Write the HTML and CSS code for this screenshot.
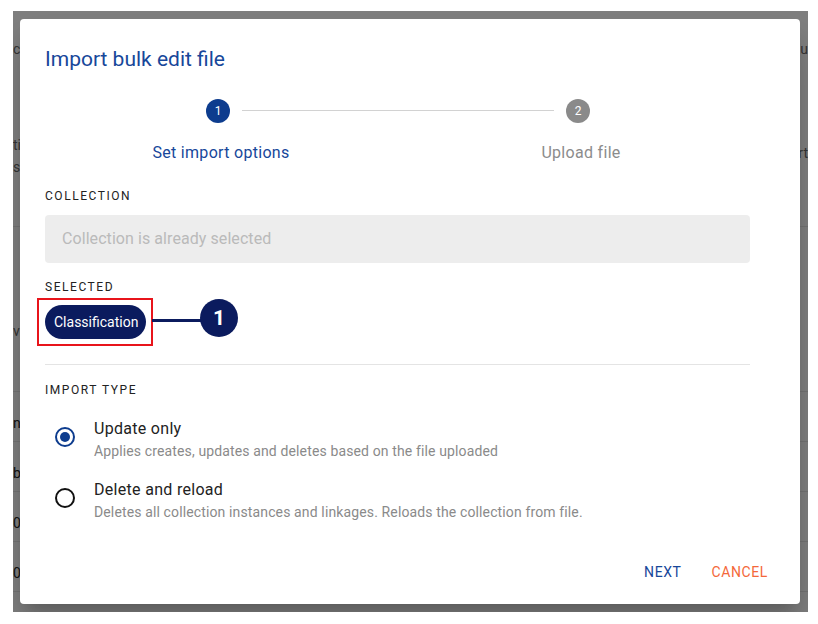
FILE: index.html
```html
<!DOCTYPE html>
<html lang="en">
<head>
    <meta charset="UTF-8">
    <meta name="viewport" content="width=device-width, initial-scale=1.0">
    <title>Import bulk edit file</title>
    <link rel="stylesheet" href="styles.css">
</head>
<body>
    <div class="screen">
        <div class="app">
            <div class="app-row row-head">
                <span class="edge-left t1">ct</span>
                <span class="edge-right t1">u</span>
                <span class="edge-left t2">ti</span>
                <span class="edge-right t5">rt</span>
                <span class="edge-left t3">sc</span>
            </div>
            <div class="app-row row-mid">
                <span class="edge-left t4">ve</span>
            </div>
            <div class="app-row row-line"><span class="edge-left dark">n</span></div>
            <div class="app-row row-line"><span class="edge-left dark">b</span></div>
            <div class="app-row row-line"><span class="edge-left dark">0</span></div>
            <div class="app-row row-line"><span class="edge-left dark">0</span></div>

            <div class="backdrop">
                <div class="dialog">
                    <h2 class="dialog-title">Import bulk edit file</h2>

                    <div class="dialog-body">
                        <div class="stepper">
                            <div class="step">
                                <div class="step-circle active">1</div>
                                <div class="step-label active">Set import options</div>
                            </div>
                            <div class="step-line"></div>
                            <div class="step">
                                <div class="step-circle">2</div>
                                <div class="step-label">Upload file</div>
                            </div>
                        </div>

                        <div class="section-label first">Collection</div>
                        <input type="text" class="field" placeholder="Collection is already selected" disabled>

                        <div class="section-label selected">Selected</div>
                        <div class="chips">
                            <div class="chip-wrap">
                                <span class="chip">Classification</span>
                                <span class="callout-box"></span>
                                <span class="callout-line"></span>
                                <span class="callout-badge">1</span>
                            </div>
                        </div>

                        <div class="divider"></div>

                        <div class="section-label import">Import type</div>
                        <div class="options">
                            <div class="option">
                                <div class="radio-box"><span class="radio checked"></span></div>
                                <div class="option-text">
                                    <div class="option-title">Update only</div>
                                    <div class="option-desc">Applies creates, updates and deletes based on the file uploaded</div>
                                </div>
                            </div>
                            <div class="option">
                                <div class="radio-box"><span class="radio"></span></div>
                                <div class="option-text">
                                    <div class="option-title">Delete and reload</div>
                                    <div class="option-desc">Deletes all collection instances and linkages. Reloads the collection from file.</div>
                                </div>
                            </div>
                        </div>
                    </div>

                    <div class="actions">
                        <button class="btn btn-next">Next</button>
                        <button class="btn btn-cancel">Cancel</button>
                    </div>
                </div>
            </div>
        </div>
    </div>
</body>
</html>
```

FILE: styles.css
```css
body {
    margin: 0;
    padding: 0;
    background: #fff;
    font-family: 'Roboto', 'Liberation Sans', sans-serif;
}

.screen {
    padding: 11px 10px 12px 13px;
}

.app {
    position: relative;
    width: 795px;
    height: 601px;
    background: #fff;
    overflow: hidden;
    display: flex;
    flex-direction: column;
    font-size: 14px;
    color: #6a6a6a;
}

.app-row {
    position: relative;
    border-bottom: 1px solid #e6e6e6;
    flex-shrink: 0;
}

.row-head {
    height: 215px;
}

.row-mid {
    height: 164px;
}

.row-line {
    height: 49px;
    display: flex;
    align-items: center;
}

.edge-left {
    position: absolute;
    left: 0;
}

.edge-right {
    position: absolute;
    right: 0;
}

.row-line .edge-left {
    position: static;
    margin-top: 12px;
}

.dark {
    color: #222;
}

.t1 { top: 30px; }
.t2 { top: 126px; }
.t3 { top: 148px; }
.t4 { top: 96px; }
.t5 { top: 134px; }

.backdrop {
    position: absolute;
    inset: 0;
    background: rgba(0, 0, 0, 0.5);
    display: flex;
    padding: 8px 8px 8px 7px;
}

.dialog {
    flex: 1;
    background: #fff;
    border-radius: 4px;
    box-shadow: 0 11px 15px -7px rgba(0, 0, 0, 0.2), 0 24px 38px 3px rgba(0, 0, 0, 0.14);
    display: flex;
    flex-direction: column;
    padding: 24px 24px 14px 25px;
}

.dialog-title {
    margin: 0;
    font-size: 21px;
    font-weight: 400;
    line-height: 32px;
    color: #17479a;
}

.dialog-body {
    padding-right: 26px;
}

.stepper {
    display: flex;
    align-items: flex-start;
    margin-top: 24px;
    padding: 0 160px 0 161px;
}

.step {
    width: 24px;
    display: flex;
    flex-direction: column;
    align-items: center;
}

.step-circle {
    width: 24px;
    height: 24px;
    border-radius: 50%;
    background: #8a8a8a;
    color: #fff;
    font-size: 12px;
    line-height: 24px;
    text-align: center;
    flex-shrink: 0;
}

.step-circle.active {
    background: #0d3c8e;
}

.step-label {
    margin-top: 18px;
    padding-left: 6px;
    font-size: 16px;
    line-height: 24px;
    letter-spacing: 0.3px;
    white-space: nowrap;
    color: #8c8c8c;
}

.step-label.active {
    color: #17479a;
}

.step-line {
    flex: 1;
    height: 1px;
    background: #d2d2d2;
    margin: 11px 12px 0;
}

.section-label {
    font-size: 12px;
    line-height: 16px;
    letter-spacing: 1.55px;
    text-transform: uppercase;
    color: #222;
}

.section-label.first {
    margin-top: 23px;
}

.section-label.selected {
    margin-top: 16px;
}

.section-label.import {
    margin-top: 17px;
}

.field {
    display: block;
    box-sizing: border-box;
    width: 100%;
    height: 48px;
    margin-top: 11px;
    padding: 0 17px 2px;
    border: none;
    border-radius: 4px;
    background: #ededed;
    font-family: inherit;
    font-size: 16px;
    letter-spacing: 0.07px;
}

.field::placeholder {
    color: #bababa;
}

.chips {
    display: flex;
    margin-top: 10px;
}

.chip-wrap {
    position: relative;
    display: flex;
}

.chip {
    height: 34px;
    padding: 0 8px 0 9px;
    border-radius: 17px;
    background: #0b1b5e;
    color: #fff;
    font-size: 14px;
    line-height: 34px;
    white-space: nowrap;
}

.callout-box {
    position: absolute;
    top: -7px;
    bottom: -7px;
    left: -8px;
    right: -7px;
    border: 2px solid #e8141b;
}

.callout-line {
    position: absolute;
    top: 14px;
    left: 107px;
    width: 50px;
    height: 3px;
    background: #0b1b5e;
}

.callout-badge {
    position: absolute;
    top: -6px;
    left: 155px;
    width: 38px;
    height: 38px;
    border-radius: 50%;
    background: #0b1b5e;
    color: #fff;
    font-size: 21px;
    font-weight: 700;
    line-height: 38px;
    text-align: center;
}

.divider {
    height: 1px;
    background: #e4e4e4;
    margin-top: 25px;
}

.options {
    margin-top: 19px;
    display: flex;
    flex-direction: column;
    gap: 17px;
}

.option {
    display: flex;
    gap: 9px;
}

.radio-box {
    width: 40px;
    display: flex;
    justify-content: center;
    padding-top: 10px;
}

.radio {
    box-sizing: border-box;
    width: 20px;
    height: 20px;
    border-radius: 50%;
    border: 2px solid #111;
    display: flex;
    align-items: center;
    justify-content: center;
}

.radio.checked {
    border-color: #0d3c8e;
}

.radio.checked::after {
    content: '';
    width: 10px;
    height: 10px;
    border-radius: 50%;
    background: #0d3c8e;
}

.option-title {
    font-size: 16px;
    line-height: 24px;
    letter-spacing: 0.3px;
    color: #222;
}

.option-desc {
    font-size: 14px;
    line-height: 20px;
    letter-spacing: 0.13px;
    color: #8a8a8a;
}

.actions {
    margin-top: auto;
    display: flex;
    justify-content: flex-end;
    gap: 14px;
}

.btn {
    height: 36px;
    padding: 0 8px;
    border: none;
    background: none;
    font-family: inherit;
    font-size: 14px;
    letter-spacing: 0.6px;
    text-transform: uppercase;
    cursor: pointer;
}

.btn-next {
    color: #17479a;
}

.btn-cancel {
    color: #f4683a;
}
```
